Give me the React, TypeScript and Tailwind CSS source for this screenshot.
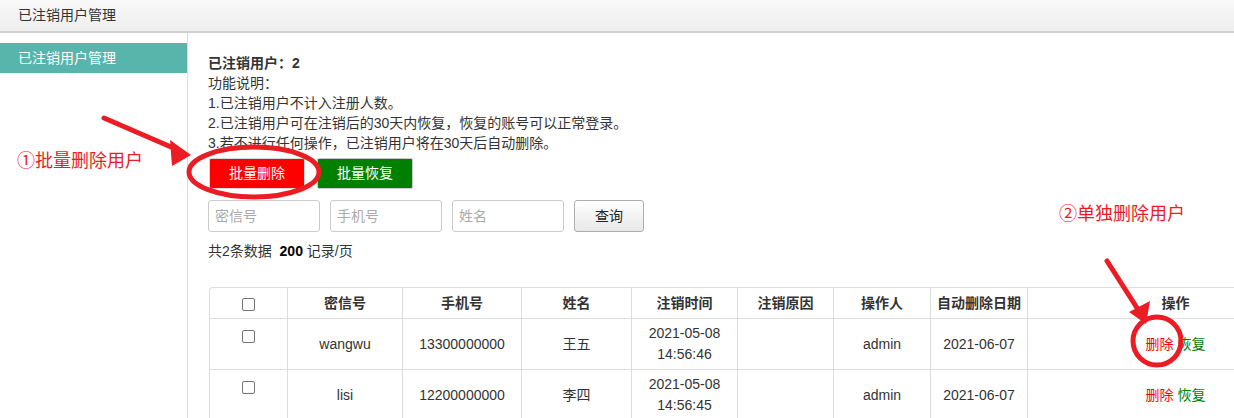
import React from 'react';

const font = { fontFamily: '"Liberation Sans", "Noto Sans CJK SC", sans-serif' };

type Row = {
  id: string;
  phone: string;
  name: string;
  date: string;
  time: string;
  operator: string;
  autoDelete: string;
};

const rows: Row[] = [
  { id: 'wangwu', phone: '13300000000', name: '王五', date: '2021-05-08', time: '14:56:46', operator: 'admin', autoDelete: '2021-06-07' },
  { id: 'lisi', phone: '12200000000', name: '李四', date: '2021-05-08', time: '14:56:45', operator: 'admin', autoDelete: '2021-06-07' },
];

const headers = ['密信号', '手机号', '姓名', '注销时间', '注销原因', '操作人', '自动删除日期', '操作'];
const widths = ['w-[115px]', 'w-[119px]', 'w-[110px]', 'w-[106px]', 'w-[96px]', 'w-[97px]', 'w-[97px]', 'w-[296px]'];

function Checkbox() {
  return <span className="inline-block w-[13px] h-[13px] border border-[#767676] rounded-[2px] bg-white" />;
}

function Annotations() {
  return (
    <>
      <svg className="absolute left-0 top-0 pointer-events-none" width="1234" height="418">
        {/* arrow 1 */}
        <line x1="104" y1="118" x2="178" y2="150" stroke="#ec1c24" strokeWidth="5" strokeLinecap="round" />
        <polygon points="191,155 170,140 172,166" fill="#ec1c24" />
        <ellipse cx="254" cy="172" rx="65" ry="25" fill="none" stroke="#ec1c24" strokeWidth="5" />
        {/* arrow 2 */}
        <line x1="1107" y1="261" x2="1139" y2="311" stroke="#ec1c24" strokeWidth="5" strokeLinecap="round" />
        <polygon points="1146,324 1129,312 1150,301" fill="#ec1c24" />
        <circle cx="1157" cy="341" r="24" fill="none" stroke="#ec1c24" strokeWidth="5" />
      </svg>
      <div className="absolute left-[17px] top-[148px] text-[18px] text-[#ec1c24] leading-[26px]">①批量删除用户</div>
      <div className="absolute left-[1059px] top-[201px] text-[18px] text-[#ec1c24] leading-[26px]">②单独删除用户</div>
    </>
  );
}

export default function App() {
  return (
    <div className="relative w-[1234px] h-[418px] overflow-hidden bg-white text-[#333] text-[14px]" style={font}>
      <div className="h-[33px] border-b-2 border-[#d0d0d0] bg-gradient-to-b from-[#f8f8f8] to-[#eeeeee] flex items-center pl-[18px]">
        <span className="text-[14px] text-[#333]">已注销用户管理</span>
      </div>

      <div className="flex h-full">
        <div className="w-[188px] shrink-0 border-r border-[#dcdcdc] pt-[10px]">
          <div className="h-[30px] bg-[#58b5ac] text-white flex items-center pl-[18px]">已注销用户管理</div>
        </div>

        <div className="pl-[20px] pt-[20px] flex-1 min-w-0">
          <div className="leading-[20px]">
            <div className="font-bold">已注销用户：2</div>
            <div>功能说明：</div>
            <div>1.已注销用户不计入注册人数。</div>
            <div>2.已注销用户可在注销后的30天内恢复，恢复的账号可以正常登录。</div>
            <div>3.若不进行任何操作，已注销用户将在30天后自动删除。</div>
          </div>

          <div className="flex gap-[12px] mt-[5px] ml-px">
            <button className="w-[96px] h-[31px] bg-[#ff0000] text-white border border-[#d9d9d9] rounded-[2px]">批量删除</button>
            <button className="w-[96px] h-[31px] bg-[#008000] text-white border border-[#cccccc] rounded-[2px]">批量恢复</button>
          </div>

          <div className="flex gap-[10px] mt-[11px]">
            {['密信号', '手机号', '姓名'].map((p) => (
              <input
                key={p}
                placeholder={p}
                className="w-[112px] h-[32px] border border-[#ccc] rounded-[3px] px-[6px] text-[14px] placeholder-[#aaa] outline-none"
                style={font}
              />
            ))}
            <button className="w-[70px] h-[32px] border border-[#adadad] rounded-[3px] bg-gradient-to-b from-white to-[#e8e8e8] text-[#222]">查询</button>
          </div>

          <div className="mt-[9px] leading-[20px]">
            共2条数据&nbsp;&nbsp;<b className="text-black">200</b> 记录/页
          </div>

          <table className="mt-[26px] ml-px border-separate border-spacing-0 table-fixed w-[1115px] border-t border-l border-[#dddddd] rounded-tl-[4px]">
            <thead>
              <tr>
                <th className="w-[78px] h-[31px] border-r border-b border-[#dddddd] font-normal align-middle">
                  <div className="flex justify-center pt-[2px]"><Checkbox /></div>
                </th>
                {headers.map((h, i) => (
                  <th key={h} className={`${widths[i]} h-[31px] border-r border-b border-[#dddddd] font-bold text-center text-[#333]`}>
                    {h}
                  </th>
                ))}
              </tr>
            </thead>
            <tbody>
              {rows.map((r) => (
                <tr key={r.id} className="text-center leading-[21px]">
                  <td className="h-[51px] border-r border-b border-[#dddddd] align-top pt-[11px]">
                    <div className="flex justify-center"><Checkbox /></div>
                  </td>
                  <td className="border-r border-b border-[#dddddd]">{r.id}</td>
                  <td className="border-r border-b border-[#dddddd]">{r.phone}</td>
                  <td className="border-r border-b border-[#dddddd]">{r.name}</td>
                  <td className="border-r border-b border-[#dddddd]">
                    <div>{r.date}</div>
                    <div>{r.time}</div>
                  </td>
                  <td className="border-r border-b border-[#dddddd]"></td>
                  <td className="border-r border-b border-[#dddddd]">{r.operator}</td>
                  <td className="border-r border-b border-[#dddddd]">{r.autoDelete}</td>
                  <td className="border-r border-b border-[#dddddd]">
                    <span className="text-[#ff0000]">删除</span>{' '}
                    <span className="text-[#008000]">恢复</span>
                  </td>
                </tr>
              ))}
            </tbody>
          </table>
        </div>
      </div>

      <Annotations />
    </div>
  );
}
